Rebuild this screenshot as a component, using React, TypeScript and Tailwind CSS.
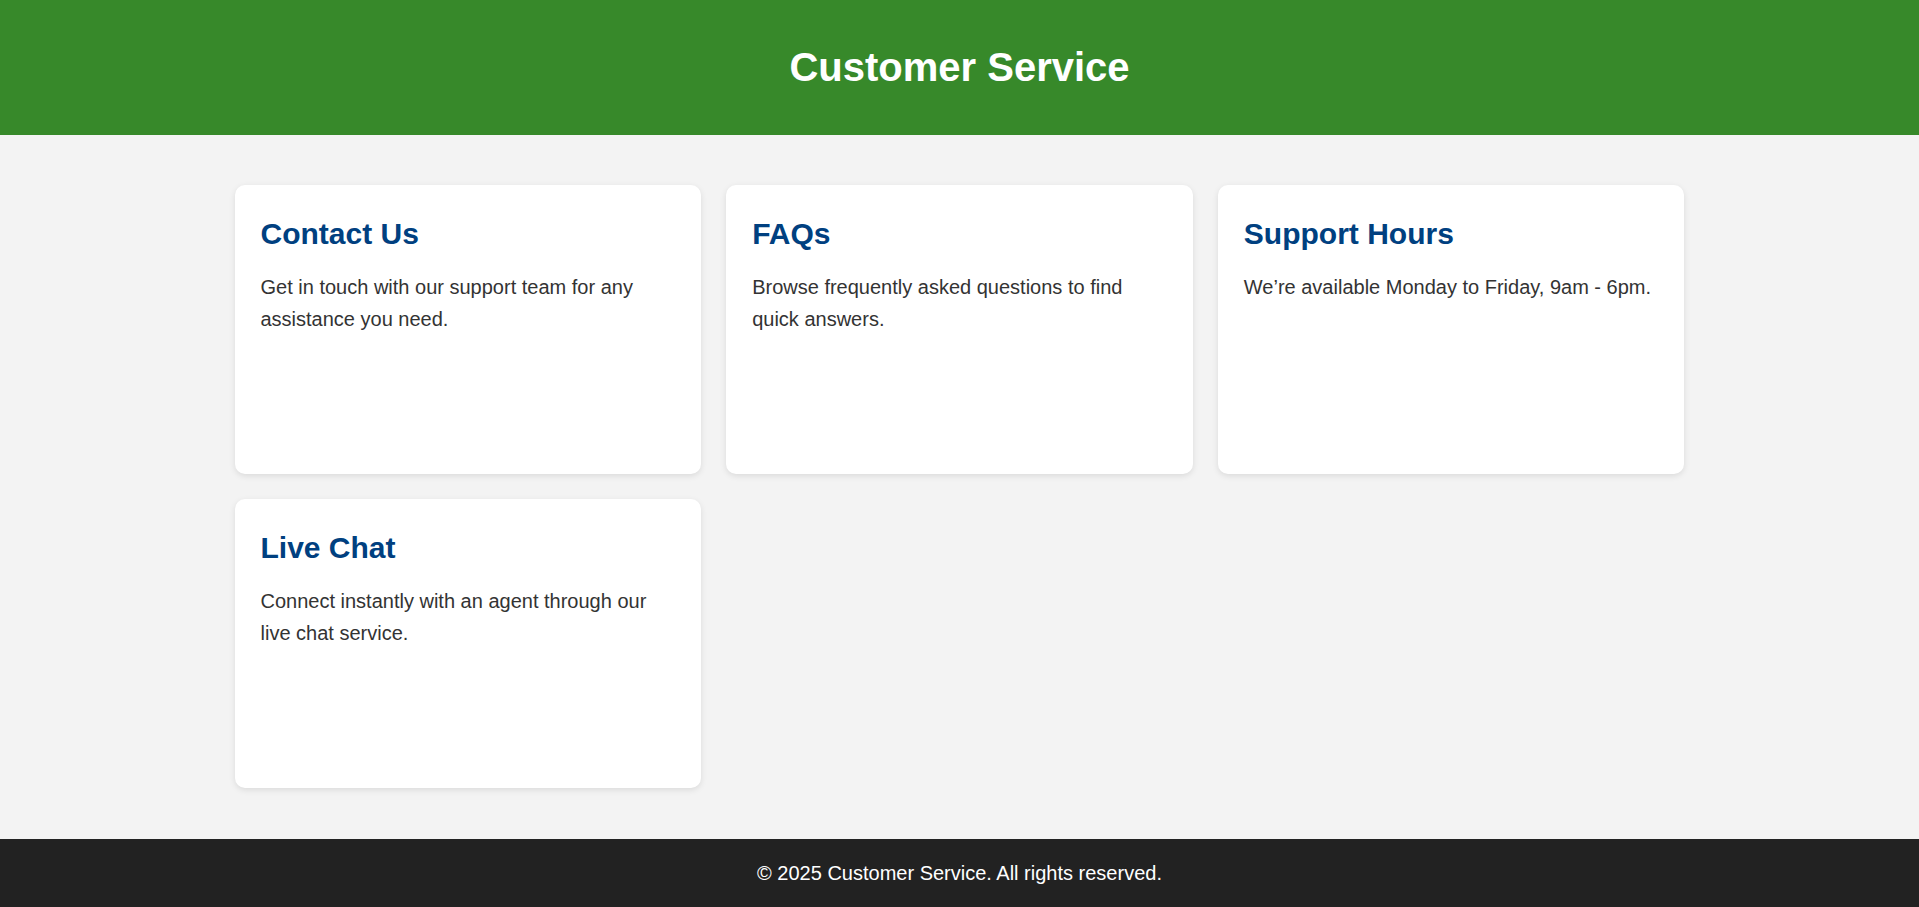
const cards = [
  { title: "Contact Us", text: "Get in touch with our support team for any assistance you need." },
  { title: "FAQs", text: "Browse frequently asked questions to find quick answers." },
  { title: "Support Hours", text: "We\u2019re available Monday to Friday, 9am - 6pm." },
  { title: "Live Chat", text: "Connect instantly with an agent through our live chat service." },
];

function Card({ title, text }: { title: string; text: string }) {
  return (
    <div className="rounded-[10px] bg-white px-[26px] pt-[32px] shadow-[0_2px_6px_rgba(0,0,0,0.1)]">
      <h2 className="text-[30px] font-bold leading-[34px] text-[#004080]">{title}</h2>
      <p className="mt-[20px] text-[20px] leading-[32px] text-[#333333]">{text}</p>
    </div>
  );
}

export default function App() {
  return (
    <div className="flex min-h-screen flex-col bg-[#f3f3f3] font-['Liberation_Sans',Arial,sans-serif]">
      <header className="flex h-[135px] items-center justify-center bg-[#37892a] pb-[2px]">
        <h1 className="text-[40px] font-bold leading-[46px] text-white">Customer Service</h1>
      </header>
      <main className="mx-auto w-full max-w-[1500px] flex-1 px-[25px] py-[50px]">
        <div className="grid grid-cols-3 auto-rows-[289px] gap-[25px]">
          {cards.map((c) => (
            <Card key={c.title} title={c.title} text={c.text} />
          ))}
        </div>
      </main>
      <footer className="bg-[#222222] py-[18px] text-center text-[20px] leading-[32px] text-white">
        &copy; 2025 Customer Service. All rights reserved.
      </footer>
    </div>
  );
}
